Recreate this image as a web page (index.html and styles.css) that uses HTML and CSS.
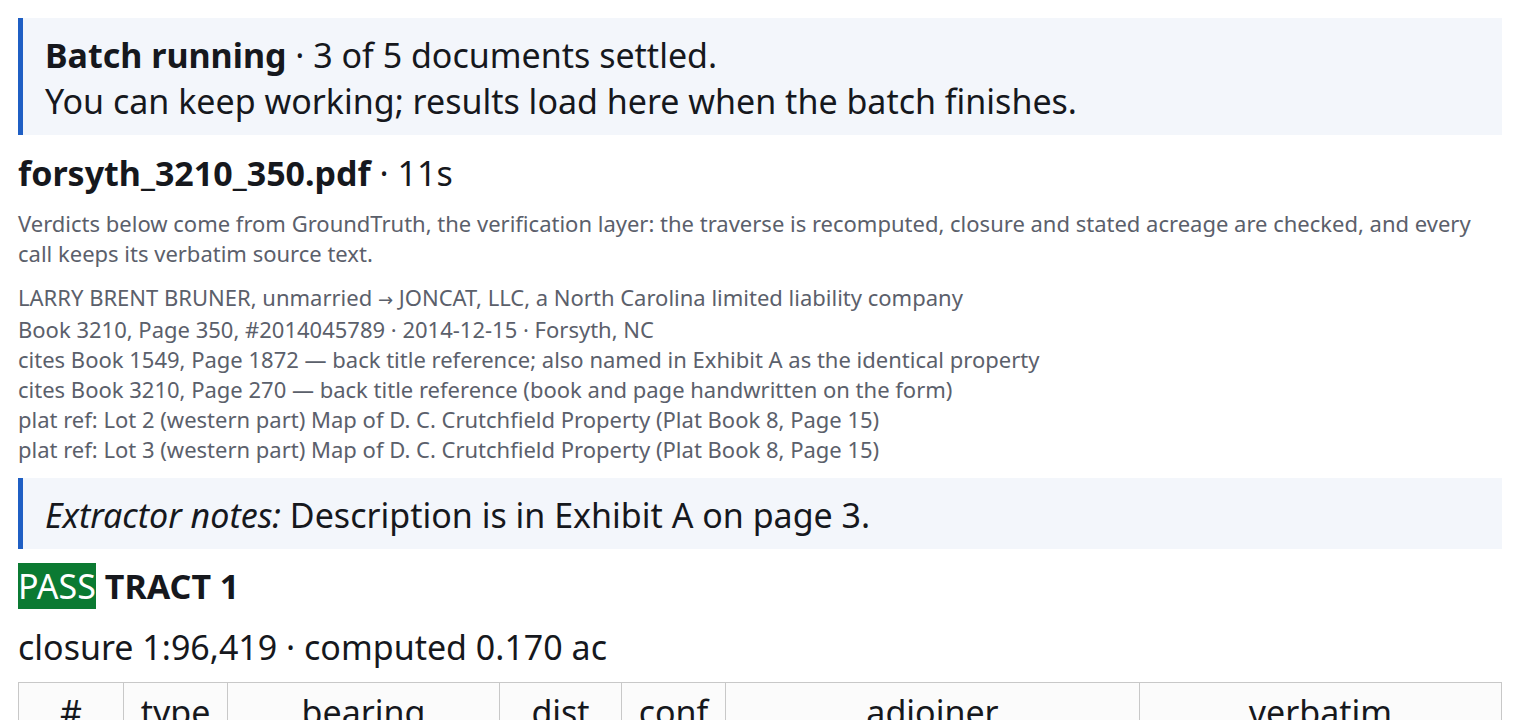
FILE: index.html
```html
<!DOCTYPE html>
<html>
<head>
<meta charset="utf-8">
<link rel="stylesheet" href="styles.css">
</head>
<body>
<div class="banner">
  <div><b>Batch running</b> · 3 of 5 documents settled.</div>
  <div>You can keep working; results load here when the batch finishes.</div>
</div>
<h2 class="doc-title"><b>forsyth_3210_350.pdf</b> · 11s</h2>
<p class="lede">Verdicts below come from GroundTruth, the verification layer: the traverse is recomputed, closure and stated acreage are checked, and every call keeps its verbatim source text.</p>
<div class="meta">
  <div class="meta-line first">LARRY BRENT BRUNER, unmarried <span class="arrow">→</span> JONCAT, LLC, a North Carolina limited liability company</div>
  <div class="meta-line">Book 3210, Page 350, #2014045789 · 2014-12-15 · Forsyth, NC</div>
  <div class="meta-line">cites Book 1549, Page 1872 — back title reference; also named in Exhibit A as the identical property</div>
  <div class="meta-line">cites Book 3210, Page 270 — back title reference (book and page handwritten on the form)</div>
  <div class="meta-line">plat ref: Lot 2 (western part) Map of D. C. Crutchfield Property (Plat Book 8, Page 15)</div>
  <div class="meta-line">plat ref: Lot 3 (western part) Map of D. C. Crutchfield Property (Plat Book 8, Page 15)</div>
</div>
<div class="notes"><i>Extractor notes:</i> Description is in Exhibit A on page 3.</div>
<div class="tract-head"><span class="badge">PASS</span> <b>TRACT 1</b></div>
<div class="closure">closure 1:96,419 · computed 0.170 ac</div>
<table class="calls">
  <thead>
    <tr>
      <th class="c-num">#</th>
      <th class="c-type">type</th>
      <th class="c-bearing">bearing</th>
      <th class="c-dist">dist</th>
      <th class="c-conf">conf</th>
      <th class="c-adj">adjoiner</th>
      <th class="c-verb">verbatim</th>
    </tr>
  </thead>
  <tbody>
    <tr><td>1</td><td>line</td><td>N 10°00′00″ E</td><td>100.00</td><td>0.98</td><td></td><td></td></tr>
  </tbody>
</table>
</body>
</html>
```
FILE: styles.css
```css
html, body {
  margin: 0;
  padding: 0;
}
body {
  padding: 18px;
  font-family: "Noto Sans", "Open Sans", sans-serif;
  font-size: 34px;
  line-height: normal;
  color: #16181d;
  background: #ffffff;
}
.banner {
  background: #f3f6fb;
  border-left: 5px solid #1f5fc4;
  padding: 14px 20px 11px 22px;
  font-size: 34px;
}
.banner b {
  font-weight: 700;
}
.doc-title {
  margin: 15px 0 0 0;
  font-size: 34px;
  font-weight: 400;
}
.doc-title b {
  font-weight: 700;
}
.lede {
  margin: 12px 0 0 0;
  font-size: 22px;
  color: #5b606b;
}
.meta {
  margin-top: 14px;
  font-size: 22px;
  color: #5b606b;
}
.meta-line.first {
  margin-bottom: 2px;
}
.arrow {
  font-family: "DejaVu Sans", sans-serif;
  font-size: 18px;
}
.notes {
  margin-top: 14px;
  background: #f3f6fb;
  border-left: 5px solid #1f5fc4;
  padding: 14px 20px 11px 22px;
  font-size: 34px;
}
.tract-head {
  margin-top: 14px;
  font-size: 34px;
}
.badge {
  background: #0b7a32;
  color: #ffffff;
}
.tract-head b {
  font-weight: 700;
}
.closure {
  margin-top: 15px;
  font-size: 34px;
}
.calls {
  margin-top: 12px;
  width: 100%;
  border-collapse: collapse;
  table-layout: fixed;
  font-size: 34px;
}
.calls th, .calls td {
  box-sizing: border-box;
  border: 1px solid #c8c8c8;
  padding: 6px 10px;
  text-align: center;
  font-weight: 400;
}
.calls th {
  background: #fbfbfb;
}
.c-num { width: 105px; }
.c-type { width: 104px; }
.c-bearing { width: 272px; }
.c-dist { width: 122px; }
.c-conf { width: 104px; }
.c-adj { width: 414px; }
```
